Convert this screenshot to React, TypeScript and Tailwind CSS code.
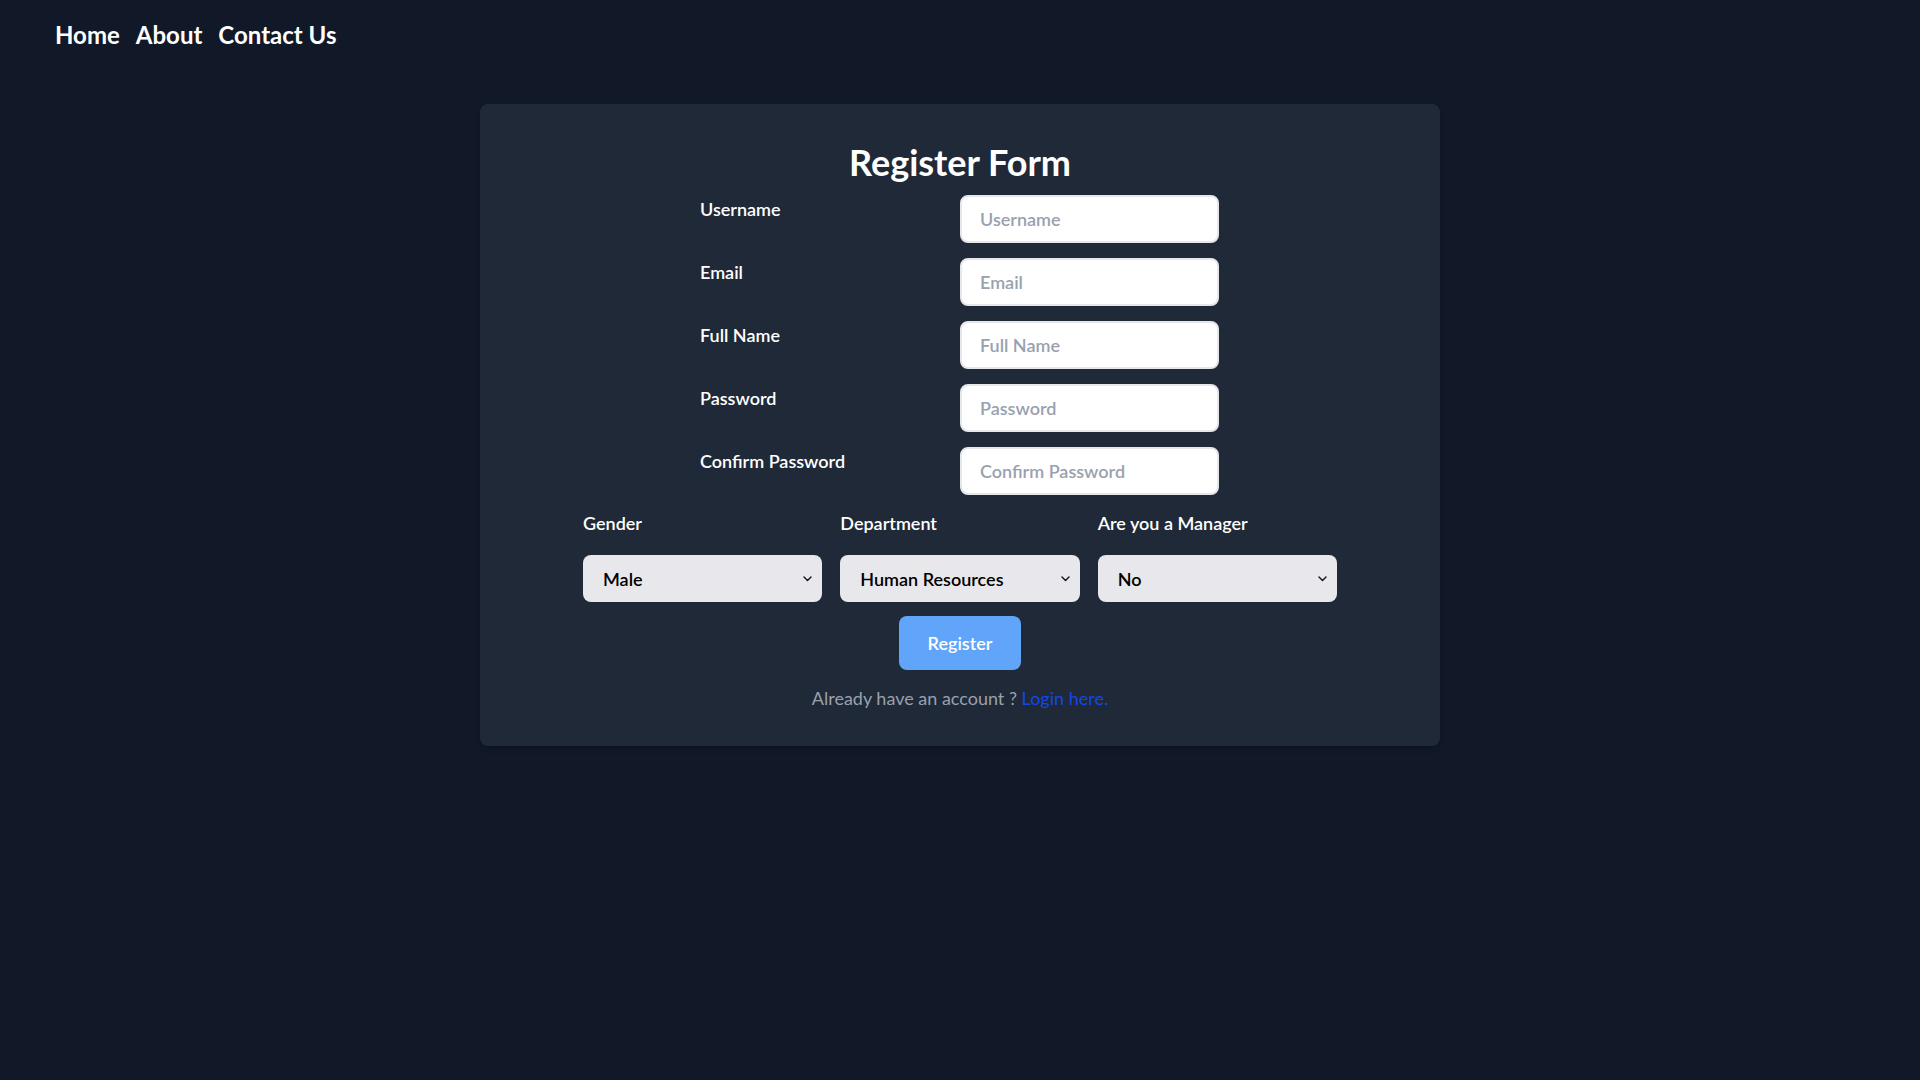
import React from 'react';

const fields = [
  { label: 'Username', type: 'text' },
  { label: 'Email', type: 'email' },
  { label: 'Full Name', type: 'text' },
  { label: 'Password', type: 'password' },
  { label: 'Confirm Password', type: 'password' },
];

const selects = [
  { label: 'Gender', options: ['Male', 'Female', 'Other'] },
  { label: 'Department', options: ['Human Resources', 'Engineering', 'Finance', 'Marketing'] },
  { label: 'Are you a Manager', options: ['No', 'Yes'] },
];

const Chevron = () => (
  <svg
    className="pointer-events-none absolute right-[10px] top-1/2 -translate-y-1/2"
    width="9"
    height="6"
    viewBox="0 0 9 6"
    fill="none"
  >
    <path d="M1 1l3.5 3.5L8 1" stroke="#111" strokeWidth="1.4" strokeLinecap="round" strokeLinejoin="round" />
  </svg>
);

const App: React.FC = () => {
  return (
    <div className="min-h-screen bg-[#111827] font-['Lato','Noto_Sans',sans-serif]">
      <nav className="flex h-[69px] items-center gap-[16px] pl-[55px] text-2xl font-bold text-white">
        <a href="#">Home</a>
        <a href="#">About</a>
        <a href="#">Contact Us</a>
      </nav>

      <div className="mx-auto mt-[35px] w-[960px] rounded-lg bg-[#1f2937] px-10 pb-[34px] pt-[36px] shadow-md">
        <h1 className="text-center text-[36px] font-bold leading-[44px] text-white">Register Form</h1>

        <form className="mt-[11px]" onSubmit={(e) => e.preventDefault()}>
          <div className="mx-auto flex w-[520px] flex-col gap-[15px]">
            {fields.map((f) => (
              <div key={f.label} className="grid grid-cols-2">
                <label className="text-lg font-semibold leading-7 text-white">{f.label}</label>
                <input
                  type={f.type}
                  placeholder={f.label}
                  className="h-12 w-[259px] rounded-lg border-2 border-gray-200 bg-white px-[18px] text-lg font-semibold text-gray-900 placeholder:text-gray-400 focus:outline-none"
                />
              </div>
            ))}
          </div>

          <div className="mx-auto mt-[14px] grid w-[754px] grid-cols-3 gap-x-[18px]">
            {selects.map((s) => (
              <div key={s.label} className="flex flex-col gap-[18px]">
                <label className="text-lg font-semibold leading-7 text-white">{s.label}</label>
                <div className="relative">
                  <select className="h-[47px] w-full appearance-none rounded-lg bg-[#e8e8ec] pl-5 pr-8 text-lg font-semibold text-black focus:outline-none">
                    {s.options.map((o) => (
                      <option key={o}>{o}</option>
                    ))}
                  </select>
                  <Chevron />
                </div>
              </div>
            ))}
          </div>

          <div className="mt-[14px] flex justify-center">
            <button
              type="submit"
              className="h-[54px] w-[122px] rounded-lg bg-[#60a5fa] text-lg font-semibold text-white"
            >
              Register
            </button>
          </div>

          <p className="mt-[14px] text-center text-lg leading-7 text-gray-400">
            Already have an account ?{' '}
            <a href="#" className="text-blue-700">
              Login here.
            </a>
          </p>
        </form>
      </div>
    </div>
  );
};

export default App;
